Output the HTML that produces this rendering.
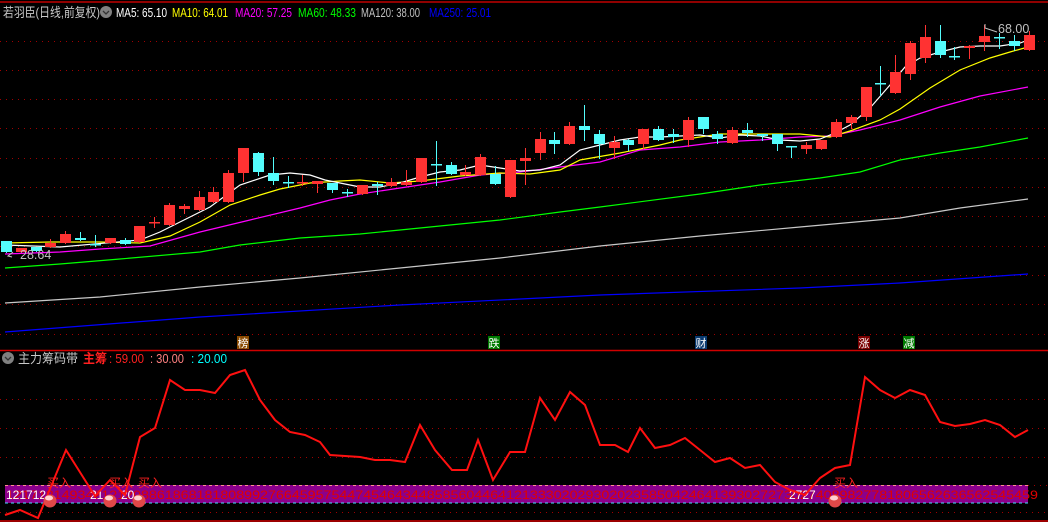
<!DOCTYPE html>
<html><head><meta charset="utf-8">
<style>
html,body{margin:0;padding:0;background:#000;width:1048px;height:522px;overflow:hidden}
svg{display:block}
text{font-family:"Liberation Sans","Noto Sans CJK SC",sans-serif}
</style></head><body>
<svg id="s" width="1048" height="522" xmlns="http://www.w3.org/2000/svg">
<rect width="1048" height="522" fill="#000"/>
<line x1="0" y1="2" x2="1048" y2="2" stroke="#c00000" stroke-width="1.5"/>
<g id="grid" stroke="#a00000" stroke-dasharray="1,5" stroke-width="1"></g>
<line x1="0" y1="350.5" x2="1048" y2="350.5" stroke="#d00000" stroke-width="1.5"/>
<line x1="0" y1="521" x2="1048" y2="521" stroke="#d00000" stroke-width="1.5"/>
<g id="ma" fill="none" stroke-width="1.2"></g>
<g id="c"></g>
<!-- header -->
<text x="3" y="17" font-size="13" fill="#c8c8c8" textLength="97" lengthAdjust="spacingAndGlyphs">若羽臣(日线,前复权)</text>
<circle cx="106" cy="12" r="6" fill="#808080"/><path d="M103 11l3 3 3-3" stroke="#333" stroke-width="1.3" fill="none"/>
<g font-size="12.5">
<text x="116" y="17" fill="#fff" textLength="51" lengthAdjust="spacingAndGlyphs">MA5: 65.10</text>
<text x="172" y="17" fill="#ffff00" textLength="56" lengthAdjust="spacingAndGlyphs">MA10: 64.01</text>
<text x="235" y="17" fill="#ff00ff" textLength="57" lengthAdjust="spacingAndGlyphs">MA20: 57.25</text>
<text x="298" y="17" fill="#00ff00" textLength="58" lengthAdjust="spacingAndGlyphs">MA60: 48.33</text>
<text x="361" y="17" fill="#c0c0c0" textLength="59" lengthAdjust="spacingAndGlyphs">MA120: 38.00</text>
<text x="429" y="17" fill="#0000ff" textLength="62" lengthAdjust="spacingAndGlyphs">MA250: 25.01</text>
</g>
<text x="998" y="33" font-size="12.5" fill="#c0c0c0">68.00</text>
<path d="M985 24l0 4 12 4" stroke="#c0c0c0" fill="none"/>
<text x="20" y="259" font-size="12.5" fill="#c0c0c0">28.64</text>
<path d="M13 252l-5 4 4 1" stroke="#c0c0c0" fill="none"/>
<!-- event labels -->
<rect x="237" y="336" width="12" height="13" fill="#8a4a00"/><text x="237.5" y="347" font-size="11" fill="#fff">榜</text>
<rect x="488" y="336" width="12" height="13" fill="#007a00"/><text x="488.5" y="347" font-size="11" fill="#fff">跌</text>
<rect x="695" y="336" width="12" height="13" fill="#0a3a70"/><text x="695.5" y="347" font-size="11" fill="#fff">财</text>
<rect x="858" y="336" width="12" height="13" fill="#7a0000"/><text x="858.5" y="347" font-size="11" fill="#fff">涨</text>
<rect x="903" y="336" width="12" height="13" fill="#007a00"/><text x="903.5" y="347" font-size="11" fill="#fff">减</text>
<!-- bottom header -->
<circle cx="8" cy="358" r="6" fill="#808080"/><path d="M5 357l3 3 3-3" stroke="#333" stroke-width="1.3" fill="none"/>
<text x="18" y="363" font-size="13" fill="#c8c8c8" textLength="60" lengthAdjust="spacingAndGlyphs">主力筹码带</text>
<text x="83" y="363" font-size="13" fill="#ff2020" font-weight="bold" textLength="24" lengthAdjust="spacingAndGlyphs">主筹</text>
<text x="109" y="363" font-size="12.5" fill="#ff2020" textLength="35" lengthAdjust="spacingAndGlyphs">: 59.00</text>
<text x="150" y="363" font-size="12.5" fill="#ff8080" textLength="34" lengthAdjust="spacingAndGlyphs">: 30.00</text>
<text x="191" y="363" font-size="12.5" fill="#00ffff" textLength="36" lengthAdjust="spacingAndGlyphs">: 20.00</text>
<!-- band -->
<rect x="5" y="485" width="1023" height="18" fill="#8b008b"/>
<line x1="5" y1="485.5" x2="1028" y2="485.5" stroke="#ff9090" stroke-dasharray="3,3"/>
<line x1="5" y1="503" x2="1028" y2="503" stroke="#40e0ff" stroke-dasharray="3,3"/>
<line x1="1028" y1="485.5" x2="1048" y2="485.5" stroke="#a00000" stroke-dasharray="1,5"/>
<line x1="0" y1="512.5" x2="1048" y2="512.5" stroke="#a00000" stroke-dasharray="1,5"/>
<text x="6" y="499" font-size="12" fill="#e00000" textLength="1032" lengthAdjust="spacingAndGlyphs">1217121493421212088618681818089927664595754474546434485856044641213330202930202358504246413930272730274089827781806562636562545459</text>
<text x="6" y="499" font-size="12" fill="#fff">121712</text>
<text x="90" y="499" font-size="12" fill="#fff">21</text>
<text x="121" y="499" font-size="12" fill="#fff">20</text>
<text x="789" y="499" font-size="12" fill="#fff">2727</text>
<polyline id="red" fill="none" stroke="#ff1010" stroke-width="2"/>
<g font-size="12" fill="#ff2020">
<text x="47" y="487">买入</text><text x="109" y="487">买入</text><text x="138" y="487">买入</text><text x="834" y="487">买入</text>
</g>
<g id="balls"></g>
</svg>
<script>
var NS="http://www.w3.org/2000/svg",s=document.getElementById('s');
function el(p,t,a){var e=document.createElementNS(NS,t);for(var k in a)e.setAttribute(k,a[k]);p.appendChild(e);return e;}
var g=document.getElementById('grid');
[41,70,99,128,158,187,216,246,275,304,334,399,428,457].forEach(function(y){el(g,'line',{x1:0,y1:y+.5,x2:1048,y2:y+.5});});
var ma=document.getElementById('ma');
var M=[
['#0000ff',"5,332 200,317 400,305 600,295 800,288 900,283 1028,274"],
['#c8c8c8',"5,303 100,297 200,287 300,278 400,268 500,258 600,246 700,236 800,227 900,218 960,208 1028,199"],
['#00ff00',"5,268 60,264 120,259 200,252 240,245 300,238 360,234 400,230 440,226 500,220 560,212 600,207 700,194 760,185 820,178 860,172 900,160 940,153 980,147 1028,138"],
['#ff00ff',"5,254 60,252 100,249 150,246 200,232 250,220 300,208 330,200 360,194 400,188 440,182 480,175 520,172 560,167 600,162 640,150 680,147 720,142 760,140 800,137 830,136 860,130 900,120 940,107 980,96 1028,87"],
['#ffff00',"5,243 50,242 100,242 140,243 170,236 200,222 230,205 260,195 280,189 310,183 340,181 360,180 390,183 420,181 460,176 500,173 530,174 560,170 580,160 620,153 660,145 680,140 720,134 760,134 800,134 830,137 850,131 880,120 900,109 930,88 960,70 990,58 1010,52 1028,47"],
['#ffffff',"5,245 60,247 140,240 160,232 190,217 210,207 240,185 270,175 290,173 310,175 325,180 340,183 360,187 380,187 400,183 420,177 440,172 460,170 480,165 500,168 520,171 540,170 560,165 580,150 600,145 620,140 640,137 660,137 700,135 720,138 740,135 760,136 780,140 800,141 820,139 835,133 850,125 870,108 890,85 905,67 920,58 940,52 960,47 980,46 1000,46 1020,43 1028,40"]];
M.forEach(function(m){el(ma,'polyline',{points:m[1],stroke:m[0]});});
var D="c241252241252 r248252248252 c247251247251 r243247239247 r234243231243 c238240232240 c244245235246 r238243238243 c240244238244 r226242226242 r222223217227 r205225203225 r206209204213 r197210191210 r192202187202 r173202170202 r148173148181 c153172152175 c173181157184 c182183176187 r182183175185 r181184181192 c183190183192 c192193189196 r185194185194 c184186182194 r182186178186 r182185170185 r158182158182 c164165141185 c165174162174 r172175165175 r157175154175 c174184166184 r160197160197 r158161148184 r139153132159 c140144132153 r126144122144 c126130105140 c134144130158 r142148136158 c140145139150 r129144129148 c129140126140 c134137129142 r120140117146 c117129117133 c134139131143 r130143127143 c130133123136 c134136134140 c134144134150 c146147146157 r145149142153 r140149140149 r122137119137 r117123115128 r087117087120 c083084066095 r072093055093 r043074041079 r037058025062 c041055025057 c056057047059 r046048045058 r036042025050 c037038033048 c041046035050 r035050031050".split(' ');
var cg=document.getElementById('c');
D.forEach(function(d,i){var col=d[0]=='r'?'#ff3232':'#54fcfc';var t=+d.substr(1,3),b=+d.substr(4,3),wt=+d.substr(7,3),wb=+d.substr(10,3);var x=Math.round(6+14.82*i);
el(cg,'line',{x1:x+.5,y1:wt,x2:x+.5,y2:wb+1,stroke:col,'stroke-width':1});
el(cg,'rect',{x:x-5,y:t,width:11,height:Math.max(b-t,1.5),fill:col});});
var R="5,515 20,510 38,518 66,450 95,496 110,480 125,495 140,437 155,428 170,380 185,390 200,390 215,393 230,375 245,370 260,400 275,420 290,432 305,435 320,442 330,455 345,456 360,457 375,460 390,460 405,462 420,425 435,450 452,470 467,470 478,440 493,480 510,452 525,452 540,398 555,420 570,392 585,405 600,445 615,445 628,452 640,428 655,448 670,445 685,438 700,450 715,462 730,458 745,468 760,465 775,482 790,490 805,495 820,478 835,468 850,465 865,377 880,390 895,398 910,390 925,395 940,422 955,426 970,424 985,420 1000,425 1015,437 1028,430";
document.getElementById('red').setAttribute('points',R);
var bg=document.getElementById('balls');
[50,110,139,835].forEach(function(x){el(bg,'circle',{cx:x,cy:501,r:6.5,fill:'#e04848'});el(bg,'ellipse',{cx:x-1,cy:498,rx:4,ry:2.5,fill:'#ffd0d0'});});
</script>
</body></html>
